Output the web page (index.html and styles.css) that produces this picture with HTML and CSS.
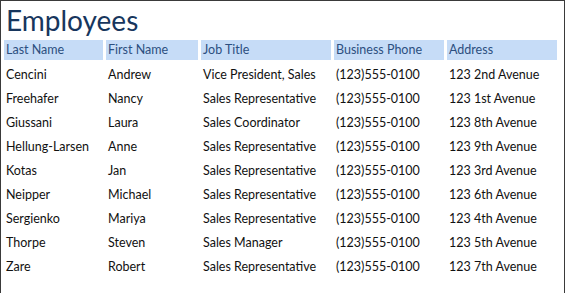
FILE: index.html
```html
<!DOCTYPE html>
<html>
<head>
<meta charset="utf-8">
<link rel="stylesheet" href="styles.css">
</head>
<body>
<div class="report">
  <h1 class="title">Employees</h1>
  <div class="grid">
    <div class="row head">
      <div class="cell">Last Name</div>
      <div class="cell">First Name</div>
      <div class="cell">Job Title</div>
      <div class="cell">Business Phone</div>
      <div class="cell">Address</div>
    </div>
    <div class="row"><div class="cell">Cencini</div><div class="cell">Andrew</div><div class="cell">Vice President, Sales</div><div class="cell">(123)555-0100</div><div class="cell">123 2nd Avenue</div></div>
    <div class="row"><div class="cell">Freehafer</div><div class="cell">Nancy</div><div class="cell">Sales Representative</div><div class="cell">(123)555-0100</div><div class="cell">123 1st Avenue</div></div>
    <div class="row"><div class="cell">Giussani</div><div class="cell">Laura</div><div class="cell">Sales Coordinator</div><div class="cell">(123)555-0100</div><div class="cell">123 8th Avenue</div></div>
    <div class="row"><div class="cell">Hellung-Larsen</div><div class="cell">Anne</div><div class="cell">Sales Representative</div><div class="cell">(123)555-0100</div><div class="cell">123 9th Avenue</div></div>
    <div class="row"><div class="cell">Kotas</div><div class="cell">Jan</div><div class="cell">Sales Representative</div><div class="cell">(123)555-0100</div><div class="cell">123 3rd Avenue</div></div>
    <div class="row"><div class="cell">Neipper</div><div class="cell">Michael</div><div class="cell">Sales Representative</div><div class="cell">(123)555-0100</div><div class="cell">123 6th Avenue</div></div>
    <div class="row"><div class="cell">Sergienko</div><div class="cell">Mariya</div><div class="cell">Sales Representative</div><div class="cell">(123)555-0100</div><div class="cell">123 4th Avenue</div></div>
    <div class="row"><div class="cell">Thorpe</div><div class="cell">Steven</div><div class="cell">Sales Manager</div><div class="cell">(123)555-0100</div><div class="cell">123 5th Avenue</div></div>
    <div class="row"><div class="cell">Zare</div><div class="cell">Robert</div><div class="cell">Sales Representative</div><div class="cell">(123)555-0100</div><div class="cell">123 7th Avenue</div></div>
  </div>
</div>
</body>
</html>
```
FILE: styles.css
```css
html, body {
  margin: 0;
  padding: 0;
  background: #ffffff;
}
.report {
  width: 563px;
  height: 293px;
  border-top: 1px solid #3a3a3a;
  border-left: 1px solid #3a3a3a;
  border-right: 1px solid #3a3a3a;
  box-sizing: content-box;
  font-family: Lato, "Open Sans", sans-serif;
  color: #111111;
}
.title {
  margin: 0;
  padding: 2px 0 0 5px;
  height: 39px;
  box-sizing: border-box;
  font-weight: normal;
  font-size: 28px;
  line-height: 34px;
  color: #17365d;
}
.grid {
  padding: 0 0 0 3px;
}
.row {
  display: grid;
  grid-template-columns: 99px 92px 130px 110px 110px;
  column-gap: 3px;
  height: 24px;
  font-size: 12.5px;
  line-height: 22px;
  align-items: start;
}
.row.head {
  height: 20px;
  margin-bottom: 4px;
  color: #2c4f80;
}
.row.head .cell {
  background: #c6dcf7;
  height: 20px;
  line-height: 20px;
}
.cell {
  padding-left: 2px;
  white-space: nowrap;
}
```
